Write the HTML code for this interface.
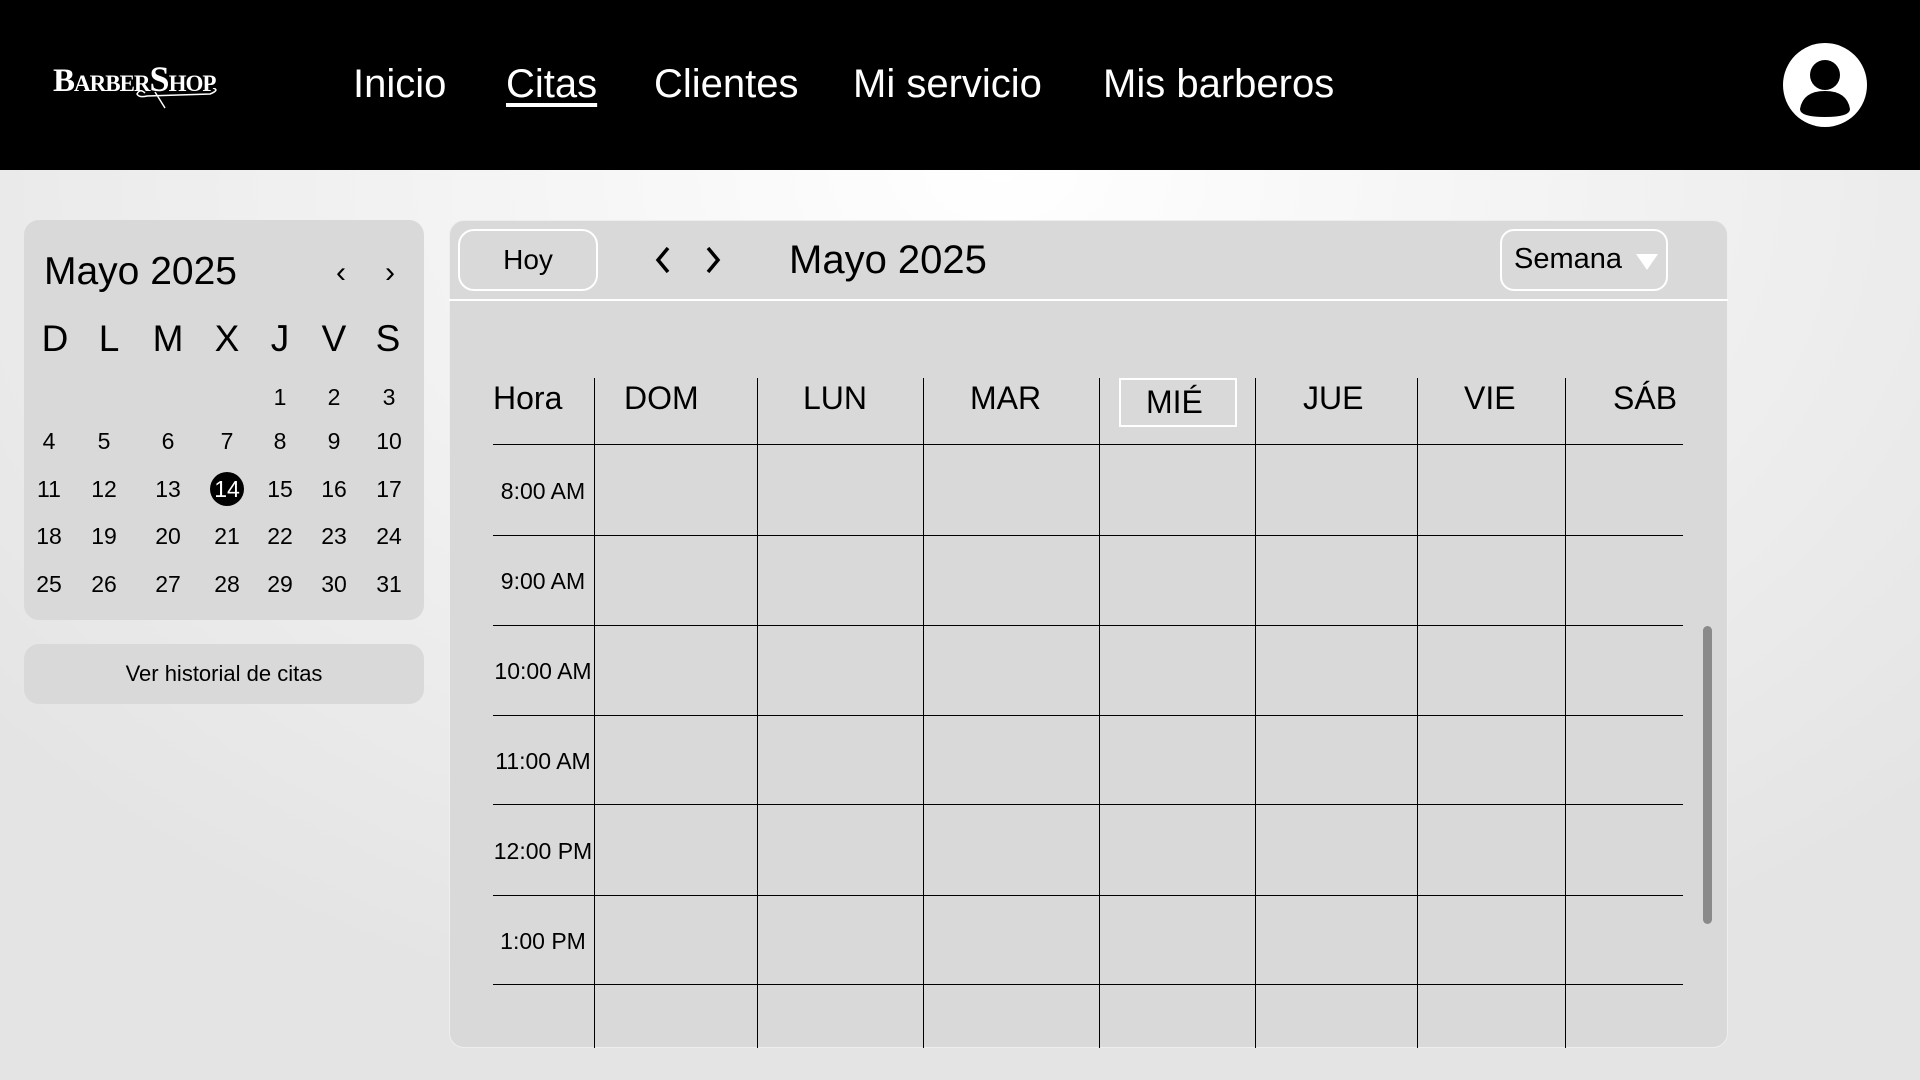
<!DOCTYPE html>
<html><head><meta charset="utf-8"><style>
*{margin:0;padding:0;box-sizing:border-box}
body{width:1920px;height:1080px;overflow:hidden;font-family:"Liberation Sans",sans-serif;color:#000;
background:radial-gradient(ellipse 1300px 900px at 1000px 170px,#fff 0%,#f4f4f4 40%,#e4e4e4 100%);position:relative}
.a{position:absolute;white-space:nowrap}
header{position:absolute;left:0;top:0;width:1920px;height:170px;background:#000}
.nav{color:#fff;font-size:40px;top:62px}
.card{position:absolute;background:#d9d9d9;border-radius:15px}
.c{transform:translateX(-50%);text-align:center}
.vl{position:absolute;width:1px;background:#000;top:378px;height:670px}
.hl{position:absolute;height:1px;background:#000;left:493px;width:1190px}
.hd{font-size:32px;top:380px}
.tm{font-size:23px;left:493px;width:100px;text-align:center}
</style></head><body>
<header>
<div class="a" style="left:53px;top:58px;color:#fff;font-family:'Liberation Serif',serif;font-weight:bold;font-size:33px;font-variant:small-caps;letter-spacing:-1px">Barber<span style="font-size:36px">S</span>hop</div>
<svg class="a" style="left:125px;top:88px" width="100" height="24"><path d="M20 5 Q15 0 12 6 Q14 10 22 8 L85 6 Q95 2 88 0 M30 4 L40 20" stroke="#fff" stroke-width="1.5" fill="none"/></svg>
<div class="a nav" style="left:353px">Inicio</div>
<div class="a nav" style="left:506px;text-decoration:underline;text-underline-offset:6px">Citas</div>
<div class="a nav" style="left:654px">Clientes</div>
<div class="a nav" style="left:853px">Mi servicio</div>
<div class="a nav" style="left:1103px">Mis barberos</div>
<svg class="a" style="left:1783px;top:43px" width="84" height="84"><circle cx="42" cy="42" r="42" fill="#fff"/><circle cx="42" cy="32" r="15" fill="#000"/><path d="M17 66 Q20 48 42 48 Q64 48 67 66 Q67 74 42 74 Q17 74 17 66Z" fill="#000"/></svg>
</header>

<div class="card" style="left:24px;top:220px;width:400px;height:400px"></div>
<div class="a" style="left:44px;top:250px;font-size:39px">Mayo 2025</div>
<div class="a c" style="left:341px;top:256px;font-size:30px">‹</div>
<div class="a c" style="left:390px;top:256px;font-size:30px">›</div>
<div class="a c" style="left:55px;top:318px;font-size:37px">D</div>
<div class="a c" style="left:109px;top:318px;font-size:37px">L</div>
<div class="a c" style="left:168px;top:318px;font-size:37px">M</div>
<div class="a c" style="left:227px;top:318px;font-size:37px">X</div>
<div class="a c" style="left:280px;top:318px;font-size:37px">J</div>
<div class="a c" style="left:334px;top:318px;font-size:37px">V</div>
<div class="a c" style="left:388px;top:318px;font-size:37px">S</div>
<div style="position:absolute;left:210px;top:472px;width:34px;height:34px;border-radius:50%;background:#000"></div>
<div id="cal"></div>

<div class="card" style="left:24px;top:644px;width:400px;height:60px"></div>
<div class="a c" style="left:224px;top:661px;font-size:22px">Ver historial de citas</div>

<div class="card" style="left:449px;top:220px;width:1279px;height:828px;border:1px solid #eee"></div>
<div style="position:absolute;left:449px;top:299px;width:1279px;height:2px;background:#fff"></div>
<div style="position:absolute;left:458px;top:229px;width:140px;height:62px;border:2px solid #fff;border-radius:16px"></div>
<div class="a c" style="left:528px;top:244px;font-size:28px">Hoy</div>
<svg class="a" style="left:652px;top:244px" width="70" height="32"><path d="M16 4 L6 16 L16 28 M56 4 L66 16 L56 28" stroke="#000" stroke-width="3.5" fill="none"/></svg>
<div class="a" style="left:789px;top:238px;font-size:40px">Mayo 2025</div>
<div style="position:absolute;left:1500px;top:229px;width:168px;height:62px;border:2px solid #fff;border-radius:14px"></div>
<div class="a" style="left:1514px;top:243px;font-size:29px">Semana</div>
<svg class="a" style="left:1635px;top:253px" width="24" height="18"><path d="M1 1 L23 1 L12 17Z" fill="#fff"/></svg>

<div class="a hd" style="left:493px">Hora</div>
<div class="a hd" style="left:624px">DOM</div>
<div class="a hd" style="left:803px">LUN</div>
<div class="a hd" style="left:970px">MAR</div>
<div style="position:absolute;left:1119px;top:378px;width:118px;height:49px;border:2px solid #fff"></div>
<div class="a hd" style="left:1146px;top:384px">MIÉ</div>
<div class="a hd" style="left:1303px">JUE</div>
<div class="a hd" style="left:1464px">VIE</div>
<div class="a hd" style="left:1613px">SÁB</div>

<div class="vl" style="left:594px"></div><div class="vl" style="left:757px"></div><div class="vl" style="left:923px"></div><div class="vl" style="left:1099px"></div><div class="vl" style="left:1255px"></div><div class="vl" style="left:1417px"></div><div class="vl" style="left:1565px"></div>
<div class="hl" style="top:444px"></div><div class="hl" style="top:535px"></div><div class="hl" style="top:625px"></div><div class="hl" style="top:715px"></div><div class="hl" style="top:804px"></div><div class="hl" style="top:895px"></div><div class="hl" style="top:984px"></div>
<div class="a tm" style="top:478px">8:00 AM</div>
<div class="a tm" style="top:568px">9:00 AM</div>
<div class="a tm" style="top:658px">10:00 AM</div>
<div class="a tm" style="top:748px">11:00 AM</div>
<div class="a tm" style="top:838px">12:00 PM</div>
<div class="a tm" style="top:928px">1:00 PM</div>
<div style="position:absolute;left:1703px;top:626px;width:9px;height:298px;border-radius:5px;background:#8a8a8a"></div>

<script>
var cx=[49,104,168,227,280,334,389],ry=[384,428,476,523,571],h='';
var rows=[[,,,,1,2,3],[4,5,6,7,8,9,10],[11,12,13,14,15,16,17],[18,19,20,21,22,23,24],[25,26,27,28,29,30,31]];
rows.forEach(function(r,i){for(var j=0;j<7;j++){if(r[j]===undefined)continue;
h+='<div class="a c" style="left:'+cx[j]+'px;top:'+ry[i]+'px;font-size:23px;'+(r[j]==14?'color:#fff;':'')+'">'+r[j]+'</div>';}});
document.getElementById('cal').outerHTML=h;
</script>
</body></html>
